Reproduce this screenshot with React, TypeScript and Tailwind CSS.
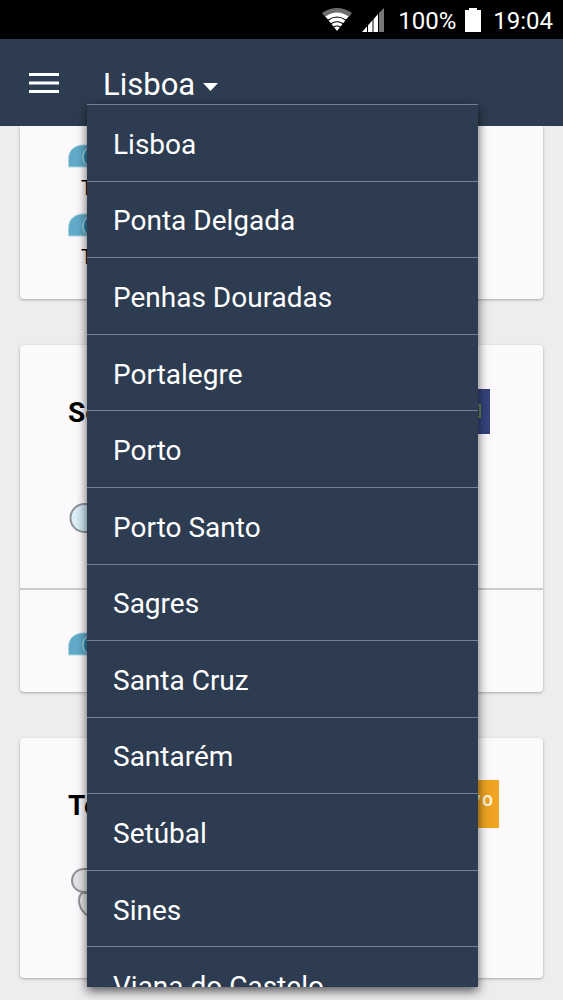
import { useState } from "react";

const cities = [
  "Lisboa",
  "Ponta Delgada",
  "Penhas Douradas",
  "Portalegre",
  "Porto",
  "Porto Santo",
  "Sagres",
  "Santa Cruz",
  "Santarém",
  "Setúbal",
  "Sines",
  "Viana do Castelo",
];

export default function App() {
  const [city, setCity] = useState("Lisboa");
  const [open, setOpen] = useState(true);

  const handleSelect = (name: string) => {
    setCity(name);
    setOpen(false);
  };

  return (
    <div className="min-h-screen overflow-hidden bg-[#eeecef] font-['Roboto',sans-serif] text-black">
      <StatusBar />

      {/* App bar */}
      <header className="relative z-10 flex h-[87px] items-center bg-[#2d3c50] pl-7 text-white">
        <button aria-label="Menu" className="flex h-8 w-8 items-center justify-center">
          <svg className="h-5 w-[30px]" viewBox="0 0 30 20" fill="currentColor">
            <path d="M0 0h30v3H0zM0 8.500h30v3H0zM0 17h30v3H0z" />
          </svg>
        </button>
        <button
          aria-haspopup="listbox"
          aria-expanded={open}
          onClick={() => setOpen(!open)}
          className="ml-[43px] flex items-center gap-2 pt-1 text-[31px] leading-9"
        >
          <span>{city}</span>
          <svg className="mt-1 h-2 w-[15px]" viewBox="0 0 15 8" fill="currentColor">
            <path d="M0 0h15L7.500 8z" />
          </svg>
        </button>

        {open && (
          <div className="absolute left-[87px] right-[85px] top-[65px] h-[883px] overflow-hidden bg-[#2d3c50] shadow-[0_4px_10px_rgba(0,0,0,0.65)]">
            <ul role="listbox" aria-label="Cidade" className="grid h-[919px] auto-rows-fr">
              {cities.map((name) => (
                <li key={name} role="option" aria-selected={name === city} className="border-t border-[#74818f]">
                  <button
                    onClick={() => handleSelect(name)}
                    className="flex h-full w-full items-center px-[26px] pt-1 text-left text-[28px] leading-8"
                  >
                    {name}
                  </button>
                </li>
              ))}
            </ul>
          </div>
        )}
      </header>

      {/* Forecast cards */}
      <main className="flex flex-col gap-[46px] px-5 pb-[23px]">
        <section className="h-[173px] rounded-b bg-[#fbf9fc] px-12 pt-[18px] shadow-[0_1px_3px_rgba(0,0,0,0.3)]">
          {[0, 1].map((row) => (
            <div key={row} className="h-[69px]">
              <RainCloud />
              <p className="pl-[13px] pt-[6px] text-[20px] leading-7">T</p>
            </div>
          ))}
        </section>

        <section className="rounded bg-[#fbf9fc] shadow-[0_1px_3px_rgba(0,0,0,0.3)]">
          <div className="h-[245px] border-b-2 border-[#cccacd] px-12 pr-11 pt-[42px]">
            <div className="flex h-12 items-center justify-between">
              <h2 className="pt-1 text-[28px] font-bold leading-8">Seg</h2>
              <div className="flex w-[110px] justify-center">
                <div className="flex h-[45px] w-[92px] items-center justify-end bg-[#36427c] pr-[9px]">
                  <svg className="h-[14px] w-7" viewBox="0 0 28 14" fill="none" stroke="#5d8a4c" strokeWidth={2}>
                    <path d="M1 1h26v12H1z" />
                  </svg>
                </div>
              </div>
            </div>
            <svg className="mt-[67px] h-8 w-11" viewBox="0 0 44 32">
              <defs>
                <linearGradient id="sky">
                  <stop offset="0" stopColor="#e2f1f9" />
                  <stop offset="1" stopColor="#a9cfe3" />
                </linearGradient>
              </defs>
              <rect x="2.500" y="2" width="40" height="28" rx="14" fill="url(#sky)" stroke="#8d9298" strokeWidth="2" />
            </svg>
          </div>
          <div className="h-[102px] px-12 pt-[42px]">
            <RainCloud />
          </div>
        </section>

        <section className="h-60 rounded bg-[#fbf9fc] px-12 pr-11 pt-[42px] shadow-[0_1px_3px_rgba(0,0,0,0.3)]">
          <div className="flex h-12 items-center justify-between">
            <h2 className="pt-1 text-[28px] font-bold leading-8">Ter</h2>
            <div className="flex h-12 w-[110px] items-center justify-end bg-gradient-to-r from-[#d98a12] to-[#f0a623] pr-[5px] pt-1 text-[28px] font-bold text-[#fdf3dc]">
              27º
            </div>
          </div>
          <svg className="mt-10 h-14 w-14" viewBox="0 0 56 56" fill="#e4e3e5" stroke="#929195" strokeWidth="2">
            <path d="M30 25H14C9 30 10 41 20 48H42V25z" />
            <rect x="4" y="1" width="40" height="23" rx="11.500" />
          </svg>
        </section>
      </main>
    </div>
  );
}

function StatusBar() {
  return (
    <div className="flex h-[39px] items-center justify-end bg-black pr-[10px] text-[24px] leading-8 text-white">
      <svg className="h-6 w-[30px]" viewBox="0 0 30 24">
        <path d="M0 5Q15-5 30 5L26.500 9.500Q15 1.500 3.500 9.500z" fill="#6d6d6d" />
        <path d="M3.500 8.500Q15 .5 26.500 8.500L15 23z" fill="#fff" />
        <path d="M5.500 12.500Q15 5.500 24.500 12.500M8.500 16Q15 11.500 21.500 16M11.500 19Q15 17 18.500 19" fill="none" stroke="#000" strokeWidth="1.200" />
      </svg>
      <svg className="ml-[10px] h-[26px] w-[22px]" viewBox="0 0 22 26">
        <path d="M17 6L22 1V25H17z" fill="#777" />
        <path d="M0 25L17 6V25z" fill="#fff" />
        <path d="M5.500 17V26M11 12V26M16.500 5V26" stroke="#000" strokeWidth="1" />
      </svg>
      <span className="ml-[14px] pt-[2px]">100%</span>
      <svg className="ml-[9px] h-[26px] w-4" viewBox="0 0 16 26" fill="#fff">
        <path d="M4 1H12V3H16V25H0V3H4z" />
      </svg>
      <span className="ml-3 pt-[2px]">19:04</span>
    </div>
  );
}

function RainCloud() {
  return (
    <svg className="h-6 w-10" viewBox="0 0 40 24">
      <path d="M.5 23V14C1 6 7 1 15 1H40V23z" fill="#61abc9" stroke="#a9d8e2" />
      <circle cx="26" cy="13" r="11" fill="#2f83ad" stroke="#9bcfe2" strokeWidth="1.500" />
    </svg>
  );
}
